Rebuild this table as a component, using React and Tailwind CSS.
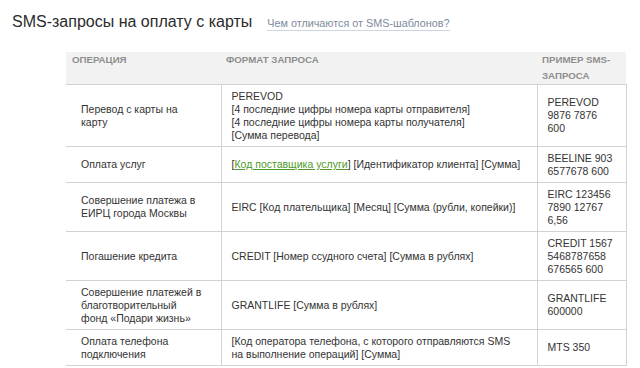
import React from 'react';

const rows = [
  {
    op: ['Перевод с карты на', 'карту'],
    format: [
      'PEREVOD',
      '[4 последние цифры номера карты отправителя]',
      '[4 последние цифры номера карты получателя]',
      '[Сумма перевода]',
    ],
    example: ['PEREVOD', '9876 7876', '600'],
  },
  {
    op: ['Оплата услуг'],
    format: [
      <>
        [<a href="#" className="text-[#4f9a2a] underline underline-offset-1">Код поставщика услуги</a>] [Идентификатор клиента] [Сумма]
      </>,
    ],
    example: ['BEELINE 903', '6577678 600'],
  },
  {
    op: ['Совершение платежа в', 'ЕИРЦ города Москвы'],
    format: ['EIRC [Код плательщика] [Месяц] [Сумма (рубли, копейки)]'],
    example: ['EIRC 123456', '7890 12767', '6,56'],
  },
  {
    op: ['Погашение кредита'],
    format: ['CREDIT [Номер ссудного счета] [Сумма в рублях]'],
    example: ['CREDIT 1567', '5468787658', '676565 600'],
  },
  {
    op: ['Совершение платежей в', 'благотворительный', 'фонд «Подари жизнь»'],
    format: ['GRANTLIFE [Сумма в рублях]'],
    example: ['GRANTLIFE', '600000'],
  },
  {
    op: ['Оплата телефона', 'подключения'],
    format: ['[Код оператора телефона, с которого отправляются SMS', 'на выполнение операций] [Сумма]'],
    example: ['MTS 350'],
  },
];

const Lines = ({ items }) =>
  items.map((line, i) => (
    <div key={i} className="whitespace-nowrap">
      {line}
    </div>
  ));

const App = () => {
  return (
    <div
      className="w-[640px] h-[368px] bg-white text-[#333] px-3 pt-[12px] overflow-hidden"
      style={{ fontFamily: '"Liberation Sans", Arial, sans-serif' }}
    >
      <div className="flex items-baseline gap-[15px]">
        <h1 className="text-[16px] leading-[20px] font-normal text-[#2b2b2b]">SMS-запросы на оплату с карты</h1>
        <a href="#" className="text-[10.8px] leading-[14px] text-[#7b8b9c] border-b border-[#cdd5de]">
          Чем отличаются от SMS-шаблонов?
        </a>
      </div>

      <table className="mt-[20px] ml-[54px] w-[560px] border-collapse table-fixed text-[10.5px] leading-[13px]">
        <colgroup>
          <col className="w-[155px]" />
          <col className="w-[316px]" />
          <col className="w-[89px]" />
        </colgroup>
        <thead>
          <tr className="bg-[#f2f2f2] text-[9.7px] leading-[16px] font-bold text-[#8e8e8e] uppercase text-left align-top">
            <th className="pl-[6px] pr-2 p-0 h-[31px] font-bold">Операция</th>
            <th className="pl-[5px] pr-2 font-bold">Формат запроса</th>
            <th className="pl-[5px] pr-1 font-bold">
              Пример SMS-
              <br />
              запроса
            </th>
          </tr>
        </thead>
        <tbody>
          {rows.map((row, i) => (
            <tr key={i} className="border-y border-[#d3d3d3] align-middle">
              <td className="pl-[15px] pr-2 py-[4.5px] border-r border-[#d3d3d3]">
                <Lines items={row.op} />
              </td>
              <td className="pl-[10px] pr-2 py-[4.5px]">
                <Lines items={row.format} />
              </td>
              <td className="pl-[10px] pr-1 py-[4.5px] border-x border-[#d3d3d3]">
                <Lines items={row.example} />
              </td>
            </tr>
          ))}
        </tbody>
      </table>
    </div>
  );
};

export default App;
